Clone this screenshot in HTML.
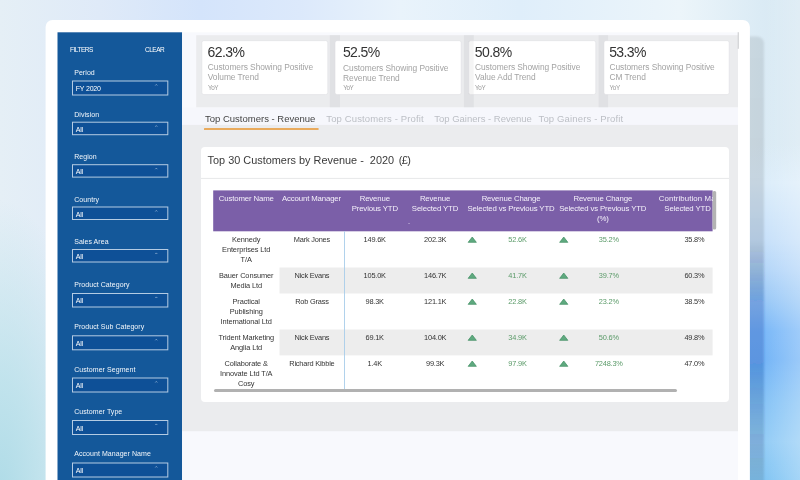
<!DOCTYPE html>
<html><head><meta charset="utf-8"><title>Dashboard</title>
<style>
*{box-sizing:border-box;margin:0;padding:0}
html,body{width:800px;height:480px;overflow:hidden}
body{font-family:"Liberation Sans",sans-serif;position:relative;
background:
 radial-gradient(ellipse 100px 300px at 0px 500px,rgba(174,219,231,1) 0%,rgba(184,224,234,.8) 40%,rgba(208,234,241,0) 100%),
 linear-gradient(90deg,rgba(255,255,255,0) 42%,rgba(255,255,255,.27) 100%) 740px 0/60px 480px no-repeat,
 linear-gradient(180deg,rgba(220,237,250,0) 0%,rgba(220,237,250,0) 30%,#dcedfa 38%,#c8e1fa 50%,#b4d6f9 56.5%,#9ccaf7 62.5%,#7cb9f8 69%,#76b6f7 75%,#88c4f6 83.5%,#95cdf6 92%,#84c6f4 100%) 740px 0/60px 480px no-repeat,
 linear-gradient(90deg,#e5eff6 0%,#dfeaf8 12.5%,#d4e4fb 25%,#dce9fb 37.5%,#e9f3fb 50%,#dfeefa 65%,#ecf5fa 85%,#dbebf5 95%,#d5e7f2 100%);}
svg.bg{position:absolute;left:0;top:0;width:800px;height:480px}
div{position:absolute;white-space:nowrap}
.tx{left:0;top:0;width:800px;height:480px;will-change:transform}
.hd{font-size:6.5px;letter-spacing:-.5px;line-height:8px;color:#fff}
.lb{font-size:7px;line-height:8px;color:#f3f7fb;letter-spacing:.06px}
.bv{font-size:7px;line-height:8px;letter-spacing:-.2px;color:#fff}
.kv{font-size:14px;line-height:16px;color:#333;letter-spacing:-.6px}
.kt{font-size:8.4px;line-height:10.3px;color:#a3a3a3;letter-spacing:-.05px}
.ky{font-size:6.3px;line-height:8px;color:#999;letter-spacing:-.35px}
.tab{font-size:9.5px;line-height:12px;color:#bcbfc5}
.title{font-size:10.9px;line-height:14px;color:#3a3a3a;white-space:pre}
.th{font-size:7.8px;line-height:9.9px;color:#f4f0fa;text-align:center;letter-spacing:-.14px;transform:translateX(-50%)}
.thclip{left:658.8px;top:190px;width:53.8px;height:41px;overflow:hidden}
.sort{left:408.2px;top:222px;font-size:5px;line-height:6px;color:#d9cfe9}
.c{font-size:7.4px;line-height:10px;color:#333;text-align:center;letter-spacing:-.2px;transform:translateX(-50%)}
.gr{color:#5a9a68}
</style></head><body>
<svg class="bg" viewBox="0 0 800 480">
<defs><linearGradient id="sh" gradientUnits="userSpaceOnUse" x1="0" y1="36" x2="0" y2="480"><stop offset="0" stop-color="rgb(0,0,0)" stop-opacity=".09"/><stop offset=".46" stop-color="rgb(0,0,0)" stop-opacity=".11"/><stop offset=".6" stop-color="rgb(20,70,170)" stop-opacity=".3"/><stop offset=".73" stop-color="rgb(20,70,170)" stop-opacity=".3"/><stop offset=".86" stop-color="rgb(10,40,100)" stop-opacity=".18"/><stop offset="1" stop-color="rgb(0,0,0)" stop-opacity=".1"/></linearGradient><filter id="bl" x="-10%" y="-10%" width="120%" height="120%"><feGaussianBlur stdDeviation=".8"/></filter></defs>
<path d="M700 36.5 H757 a7 7 0 0 1 7 7 V490 H700 Z" fill="url(#sh)" filter="url(#bl)"/>
<rect x="45.60" y="19.90" width="704.30" height="480.00" fill="#fff" rx="7"/>
<rect x="57.50" y="32.30" width="124.60" height="460.00" fill="#14589a"/>
<rect x="72.50" y="81.00" width="95.30" height="14.00" fill="#0e5097" stroke="#b4cbe3" stroke-width="1"/>
<path d="M155.30 85.50 L156.30 84.40 L157.30 85.50" fill="none" stroke="#a9c3de" stroke-width=".65"/>
<rect x="72.50" y="122.20" width="95.30" height="12.50" fill="#0e5097" stroke="#b4cbe3" stroke-width="1"/>
<path d="M155.30 126.70 L156.30 125.60 L157.30 126.70" fill="none" stroke="#a9c3de" stroke-width=".65"/>
<rect x="72.50" y="164.70" width="95.30" height="12.40" fill="#0e5097" stroke="#b4cbe3" stroke-width="1"/>
<path d="M155.30 169.20 L156.30 168.10 L157.30 169.20" fill="none" stroke="#a9c3de" stroke-width=".65"/>
<rect x="72.50" y="207.00" width="95.30" height="12.50" fill="#0e5097" stroke="#b4cbe3" stroke-width="1"/>
<path d="M155.30 211.50 L156.30 210.40 L157.30 211.50" fill="none" stroke="#a9c3de" stroke-width=".65"/>
<rect x="72.50" y="249.50" width="95.30" height="12.50" fill="#0e5097" stroke="#b4cbe3" stroke-width="1"/>
<path d="M155.30 254.00 L156.30 252.90 L157.30 254.00" fill="none" stroke="#a9c3de" stroke-width=".65"/>
<rect x="72.50" y="293.50" width="95.30" height="13.50" fill="#0e5097" stroke="#b4cbe3" stroke-width="1"/>
<path d="M155.30 298.00 L156.30 296.90 L157.30 298.00" fill="none" stroke="#a9c3de" stroke-width=".65"/>
<rect x="72.50" y="335.80" width="95.30" height="14.00" fill="#0e5097" stroke="#b4cbe3" stroke-width="1"/>
<path d="M155.30 340.30 L156.30 339.20 L157.30 340.30" fill="none" stroke="#a9c3de" stroke-width=".65"/>
<rect x="72.50" y="378.00" width="95.30" height="14.00" fill="#0e5097" stroke="#b4cbe3" stroke-width="1"/>
<path d="M155.30 382.50 L156.30 381.40 L157.30 382.50" fill="none" stroke="#a9c3de" stroke-width=".65"/>
<rect x="72.50" y="420.50" width="95.30" height="14.00" fill="#0e5097" stroke="#b4cbe3" stroke-width="1"/>
<path d="M155.30 425.00 L156.30 423.90 L157.30 425.00" fill="none" stroke="#a9c3de" stroke-width=".65"/>
<rect x="72.50" y="463.00" width="95.30" height="14.00" fill="#0e5097" stroke="#b4cbe3" stroke-width="1"/>
<path d="M155.30 467.50 L156.30 466.40 L157.30 467.50" fill="none" stroke="#a9c3de" stroke-width=".65"/>
<rect x="182.10" y="32.30" width="555.90" height="460.00" fill="#f8f9fd"/>
<rect x="196.20" y="35.20" width="541.80" height="72.30" fill="#ebecee"/>
<rect x="329.80" y="35.20" width="10.20" height="72.30" fill="#e0e1e4"/>
<rect x="463.90" y="35.20" width="9.90" height="72.30" fill="#e0e1e4"/>
<rect x="598.60" y="35.20" width="9.50" height="72.30" fill="#e0e1e4"/>
<rect x="737.70" y="32.20" width="1.10" height="16.60" fill="#cdced0"/>
<rect x="182.10" y="107.50" width="555.90" height="17.40" fill="#f6f7fc"/>
<rect x="182.10" y="124.90" width="555.90" height="306.30" fill="#ebecee"/>
<rect x="201.85" y="40.65" width="125.90" height="53.9" rx="2" fill="#fff" stroke="#dcdde0" stroke-width=".5"/>
<rect x="335.05" y="40.65" width="126.10" height="53.9" rx="2" fill="#fff" stroke="#dcdde0" stroke-width=".5"/>
<rect x="468.65" y="40.65" width="127.10" height="53.9" rx="2" fill="#fff" stroke="#dcdde0" stroke-width=".5"/>
<rect x="604.00" y="40.65" width="125.15" height="53.9" rx="2" fill="#fff" stroke="#dcdde0" stroke-width=".5"/>
<rect x="468.60" y="40.90" width="5.10" height="53.40" fill="rgba(0,0,0,.045)"/>
<rect x="204.00" y="127.95" width="114.60" height="2.10" fill="#e9aa5d" rx="0.6"/>
<rect x="201.00" y="147.00" width="528.00" height="255.00" fill="#fff" rx="4"/>
<rect x="201.00" y="177.90" width="528.00" height="0.90" fill="#e4e5e7"/>
<rect x="213.20" y="190.40" width="499.40" height="40.90" fill="#7b5fa8"/>
<rect x="712.60" y="191.00" width="3.60" height="38.60" fill="#b3b3b3" rx="1.5"/>
<path d="M472.25 237.00 L476.35 242.35 L468.15 242.35 Z" fill="#5fa97f" stroke="#3f8e62" stroke-width=".7" stroke-linejoin="round"/>
<path d="M563.75 237.00 L567.85 242.35 L559.65 242.35 Z" fill="#5fa97f" stroke="#3f8e62" stroke-width=".7" stroke-linejoin="round"/>
<rect x="279.50" y="267.50" width="433.10" height="26.00" fill="#ededed"/>
<path d="M472.25 273.00 L476.35 278.35 L468.15 278.35 Z" fill="#5fa97f" stroke="#3f8e62" stroke-width=".7" stroke-linejoin="round"/>
<path d="M563.75 273.00 L567.85 278.35 L559.65 278.35 Z" fill="#5fa97f" stroke="#3f8e62" stroke-width=".7" stroke-linejoin="round"/>
<path d="M472.25 299.00 L476.35 304.35 L468.15 304.35 Z" fill="#5fa97f" stroke="#3f8e62" stroke-width=".7" stroke-linejoin="round"/>
<path d="M563.75 299.00 L567.85 304.35 L559.65 304.35 Z" fill="#5fa97f" stroke="#3f8e62" stroke-width=".7" stroke-linejoin="round"/>
<rect x="279.50" y="329.50" width="433.10" height="25.90" fill="#ededed"/>
<path d="M472.25 335.00 L476.35 340.35 L468.15 340.35 Z" fill="#5fa97f" stroke="#3f8e62" stroke-width=".7" stroke-linejoin="round"/>
<path d="M563.75 335.00 L567.85 340.35 L559.65 340.35 Z" fill="#5fa97f" stroke="#3f8e62" stroke-width=".7" stroke-linejoin="round"/>
<path d="M472.25 361.00 L476.35 366.35 L468.15 366.35 Z" fill="#5fa97f" stroke="#3f8e62" stroke-width=".7" stroke-linejoin="round"/>
<path d="M563.75 361.00 L567.85 366.35 L559.65 366.35 Z" fill="#5fa97f" stroke="#3f8e62" stroke-width=".7" stroke-linejoin="round"/>
<rect x="344.10" y="231.30" width="0.90" height="158.00" fill="#a9cdea"/>
<rect x="214.00" y="388.90" width="463.00" height="3.10" fill="#b1b1b1" rx="1.55"/>
</svg>
<div class="tx">
<div class="hd" style="left:70.00px;top:46.00px">FILTERS</div>
<div class="hd" style="left:145.00px;top:46.00px">CLEAR</div>
<div class="lb" style="left:74.20px;top:69.00px">Period</div>
<div class="bv" style="left:75.80px;top:85.00px">FY 2020</div>
<div class="lb" style="left:74.20px;top:111.00px">Division</div>
<div class="bv" style="left:75.80px;top:126.00px">All</div>
<div class="lb" style="left:74.20px;top:153.00px">Region</div>
<div class="bv" style="left:75.80px;top:168.00px">All</div>
<div class="lb" style="left:74.20px;top:196.00px">Country</div>
<div class="bv" style="left:75.80px;top:211.00px">All</div>
<div class="lb" style="left:74.20px;top:238.00px">Sales Area</div>
<div class="bv" style="left:75.80px;top:253.00px">All</div>
<div class="lb" style="left:74.20px;top:281.00px">Product Category</div>
<div class="bv" style="left:75.80px;top:297.00px">All</div>
<div class="lb" style="left:74.20px;top:323.00px">Product Sub Category</div>
<div class="bv" style="left:75.80px;top:340.00px">All</div>
<div class="lb" style="left:74.20px;top:366.00px">Customer Segment</div>
<div class="bv" style="left:75.80px;top:382.00px">All</div>
<div class="lb" style="left:74.20px;top:408.00px">Customer Type</div>
<div class="bv" style="left:75.80px;top:425.00px">All</div>
<div class="lb" style="left:74.20px;top:450.00px">Account Manager Name</div>
<div class="bv" style="left:75.80px;top:467.00px">All</div>
<div class="kv" style="left:207.60px;top:44.00px">62.3%</div>
<div class="kt" style="left:207.80px;top:62.00px">Customers Showing Positive<br>Volume Trend</div>
<div class="ky" style="left:207.90px;top:84.00px">YoY</div>
<div class="kv" style="left:342.90px;top:44.00px">52.5%</div>
<div class="kt" style="left:343.10px;top:63.00px">Customers Showing Positive<br>Revenue Trend</div>
<div class="ky" style="left:343.20px;top:84.00px">YoY</div>
<div class="kv" style="left:474.80px;top:44.00px">50.8%</div>
<div class="kt" style="left:475.00px;top:62.00px">Customers Showing Positive<br>Value Add Trend</div>
<div class="ky" style="left:475.10px;top:84.00px">YoY</div>
<div class="kv" style="left:609.20px;top:44.00px">53.3%</div>
<div class="kt" style="left:609.40px;top:62.00px">Customers Showing Positive<br>CM Trend</div>
<div class="ky" style="left:609.50px;top:84.00px">YoY</div>
<div class="tab" style="left:205.00px;top:113.00px;color:#444">Top Customers - Revenue</div>
<div class="tab" style="left:326.30px;top:113.00px;color:#bcbfc5;letter-spacing:.13px">Top Customers - Profit</div>
<div class="tab" style="left:434.20px;top:113.00px">Top Gainers - Revenue</div>
<div class="tab" style="left:538.50px;top:113.00px;color:#bcbfc5;letter-spacing:.15px">Top Gainers - Profit</div>
<div class="title" style="left:207.60px;top:153.00px">Top 30 Customers by Revenue -  2020 <span style="letter-spacing:-.5px;margin-left:1.6px">(£)</span></div>
<div class="th" style="left:246.30px;top:194.00px">Customer Name</div>
<div class="th" style="left:311.50px;top:194.00px">Account Manager</div>
<div class="th" style="left:374.80px;top:194.00px">Revenue<br>Previous YTD</div>
<div class="th" style="left:435.00px;top:194.00px">Revenue<br>Selected YTD</div>
<div class="th" style="left:511.00px;top:194.00px">Revenue Change<br>Selected vs Previous YTD</div>
<div class="th" style="left:602.80px;top:194.00px">Revenue Change<br>Selected vs Previous YTD<br>(%)</div>
<div class="thclip"><div class="th" style="left:0;top:4px;transform:none;text-align:left;letter-spacing:.12px">Contribution Margin</div><div class="th" style="left:28.7px;top:14px">Selected YTD</div></div>
<div class="sort">&#711;</div>
<div class="c" style="left:246.20px;top:235.00px;letter-spacing:-.1px">Kennedy<br>Enterprises Ltd<br>T/A</div>
<div class="c" style="left:311.90px;top:235.00px">Mark Jones</div>
<div class="c" style="left:374.70px;top:235.00px">149.6K</div>
<div class="c" style="left:435.20px;top:235.00px">202.3K</div>
<div class="c gr" style="left:517.50px;top:235.00px">52.6K</div>
<div class="c gr" style="left:608.80px;top:235.00px">35.2%</div>
<div class="c" style="left:694.40px;top:235.00px">35.8%</div>
<div class="c" style="left:246.20px;top:271.00px;letter-spacing:-.1px">Bauer Consumer<br>Media Ltd</div>
<div class="c" style="left:311.90px;top:271.00px">Nick Evans</div>
<div class="c" style="left:374.70px;top:271.00px">105.0K</div>
<div class="c" style="left:435.20px;top:271.00px">146.7K</div>
<div class="c gr" style="left:517.50px;top:271.00px">41.7K</div>
<div class="c gr" style="left:608.80px;top:271.00px">39.7%</div>
<div class="c" style="left:694.40px;top:271.00px">60.3%</div>
<div class="c" style="left:246.20px;top:297.00px;letter-spacing:-.1px">Practical<br>Publishing<br>International Ltd</div>
<div class="c" style="left:311.90px;top:297.00px">Rob Grass</div>
<div class="c" style="left:374.70px;top:297.00px">98.3K</div>
<div class="c" style="left:435.20px;top:297.00px">121.1K</div>
<div class="c gr" style="left:517.50px;top:297.00px">22.8K</div>
<div class="c gr" style="left:608.80px;top:297.00px">23.2%</div>
<div class="c" style="left:694.40px;top:297.00px">38.5%</div>
<div class="c" style="left:246.20px;top:333.00px;letter-spacing:-.1px">Trident Marketing<br>Anglia Ltd</div>
<div class="c" style="left:311.90px;top:333.00px">Nick Evans</div>
<div class="c" style="left:374.70px;top:333.00px">69.1K</div>
<div class="c" style="left:435.20px;top:333.00px">104.0K</div>
<div class="c gr" style="left:517.50px;top:333.00px">34.9K</div>
<div class="c gr" style="left:608.80px;top:333.00px">50.6%</div>
<div class="c" style="left:694.40px;top:333.00px">49.8%</div>
<div class="c" style="left:246.20px;top:359.00px;letter-spacing:-.1px">Collaborate &amp;<br>Innovate Ltd T/A<br>Cosy</div>
<div class="c" style="left:311.90px;top:359.00px">Richard Kibble</div>
<div class="c" style="left:374.70px;top:359.00px">1.4K</div>
<div class="c" style="left:435.20px;top:359.00px">99.3K</div>
<div class="c gr" style="left:517.50px;top:359.00px">97.9K</div>
<div class="c gr" style="left:608.80px;top:359.00px">7248.3%</div>
<div class="c" style="left:694.40px;top:359.00px">47.0%</div>
</div>
</body></html>
